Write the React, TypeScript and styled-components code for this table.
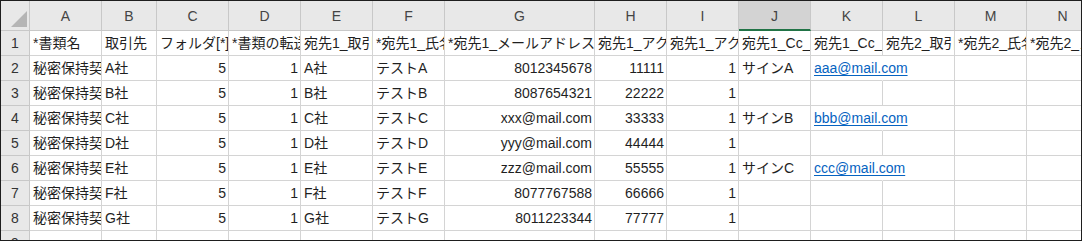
import React from 'react';
import styled, { createGlobalStyle, css } from 'styled-components';

const GlobalStyle = createGlobalStyle`
  html, body {
    margin: 0;
    padding: 0;
    background: #ffffff;
  }
  body {
    font-family: "Liberation Sans", "Noto Sans CJK JP", sans-serif;
  }
`;

const COLUMN_WIDTHS = [72, 55, 72, 72, 72, 72, 150, 72, 72, 72, 72, 72, 72, 72];
const COLUMN_LETTERS = ['A', 'B', 'C', 'D', 'E', 'F', 'G', 'H', 'I', 'J', 'K', 'L', 'M', 'N'];
const SELECTED_COLUMN = 'J';
const GRID_LINE = '#d4d4d4';
const HEAD_LINE = '#c8c8c8';

type Align = 'left' | 'right';

interface CellData {
  value?: string;
  align?: Align;
  link?: boolean;
}

const Frame = styled.div`
  box-sizing: border-box;
  width: 1082px;
  height: 241px;
  border: 1px solid #1e1e1e;
  overflow: hidden;
  background: #ffffff;
`;

const Sheet = styled.div`
  display: grid;
  grid-template-columns: 29px ${COLUMN_WIDTHS.map(w => `${w}px`).join(' ')};
  grid-template-rows: 30px repeat(9, 25px);
  font-size: 14px;
  color: #1f1f1f;
`;

const Corner = styled.div`
  box-sizing: border-box;
  background: #e8e8e8;
  border-right: 1px solid ${HEAD_LINE};
  border-bottom: 1px solid ${HEAD_LINE};
  display: flex;
  align-items: flex-end;
  justify-content: flex-end;
  padding: 0 2px 3px 0;
`;

const ColHead = styled.div<{ $selected: boolean }>`
  box-sizing: border-box;
  display: flex;
  align-items: center;
  justify-content: center;
  background: #e8e8e8;
  color: #444444;
  border-right: 1px solid ${HEAD_LINE};
  border-bottom: 1px solid ${HEAD_LINE};
  padding-top: 1px;

  ${props => props.$selected && css`
    background: #d3d3d3;
    border-bottom: 2px solid #217346;
    padding-top: 2px;
  `}
`;

const RowHead = styled.div`
  box-sizing: border-box;
  display: flex;
  align-items: center;
  justify-content: center;
  background: #e8e8e8;
  color: #333333;
  border-right: 1px solid ${HEAD_LINE};
  border-bottom: 1px solid ${HEAD_LINE};
`;

const Cell = styled.div<{ $align: Align; $spill: boolean }>`
  box-sizing: border-box;
  min-width: 0;
  line-height: 24px;
  padding: 0 2px 0 3px;
  white-space: nowrap;
  overflow: hidden;
  text-align: ${props => props.$align};
  border-right: 1px solid ${GRID_LINE};
  border-bottom: 1px solid ${GRID_LINE};

  ${props => props.$spill && css`
    overflow: visible;
    border-right-color: transparent;
  `}
`;

const MailLink = styled.span`
  color: #0563c1;
  text-decoration: underline;
  text-underline-offset: 2px;
`;

const CornerMark = () => (
  <svg width="16" height="16" viewBox="0 0 16 16">
    <polygon points="0,16 16,0 16,16" fill="#b5b5b5" />
  </svg>
);

const headers = [
  '*書類名',
  '取引先',
  'フォルダ[*]',
  '*書類の転送',
  '宛先1_取引先名',
  '*宛先1_氏名',
  '*宛先1_メールアドレス',
  '宛先1_アクセスコード',
  '宛先1_アクセス期限',
  '宛先1_Cc_氏名',
  '宛先1_Cc_メールアドレス',
  '宛先2_取引先名',
  '*宛先2_氏名',
  '*宛先2_メールアドレス',
];

const companies = ['A', 'B', 'C', 'D', 'E', 'F', 'G'];
const addresses = [
  '8012345678',
  '8087654321',
  'xxx@mail.com',
  'yyy@mail.com',
  'zzz@mail.com',
  '8077767588',
  '8011223344',
];
const signers: Record<number, [string, string]> = {
  0: ['サインA', 'aaa@mail.com'],
  2: ['サインB', 'bbb@mail.com'],
  4: ['サインC', 'ccc@mail.com'],
};

const buildRow = (letter: string, i: number): CellData[] => {
  const cc = signers[i];
  return [
    { value: '秘密保持契約書' },
    { value: `${letter}社` },
    { value: '5', align: 'right' },
    { value: '1', align: 'right' },
    { value: `${letter}社` },
    { value: `テスト${letter}` },
    { value: addresses[i], align: 'right' },
    { value: String(i + 1).repeat(5), align: 'right' },
    { value: '1', align: 'right' },
    { value: cc ? cc[0] : undefined },
    { value: cc ? cc[1] : undefined, link: !!cc },
    {},
    {},
    {},
  ];
};

const rows: CellData[][] = [
  headers.map(value => ({ value })),
  ...companies.map(buildRow),
  COLUMN_LETTERS.map(() => ({})),
];

export default function App() {
  return (
    <>
      <GlobalStyle />
      <Frame>
        <Sheet>
          <Corner>
            <CornerMark />
          </Corner>
          {COLUMN_LETTERS.map(letter => (
            <ColHead key={letter} $selected={letter === SELECTED_COLUMN}>
              {letter}
            </ColHead>
          ))}

          {rows.map((row, r) => (
            <React.Fragment key={r}>
              <RowHead>{r + 1}</RowHead>
              {row.map((cell, c) => (
                <Cell
                  key={c}
                  $align={cell.align ?? 'left'}
                  $spill={!!cell.link}
                >
                  {cell.link ? <MailLink>{cell.value}</MailLink> : cell.value}
                </Cell>
              ))}
            </React.Fragment>
          ))}
        </Sheet>
      </Frame>
    </>
  );
}
